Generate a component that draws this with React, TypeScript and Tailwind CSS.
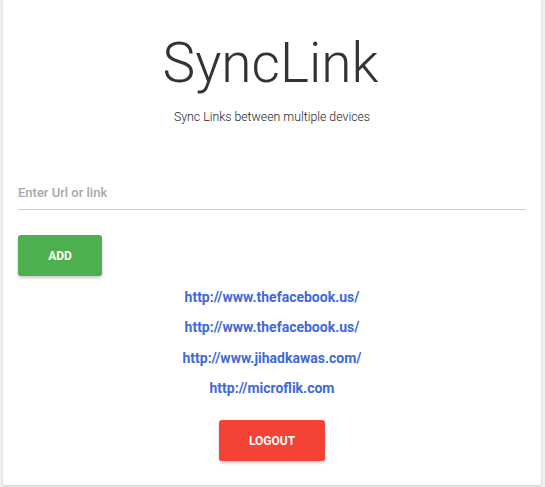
import { useState } from 'react'

const links = [
  'http://www.thefacebook.us/',
  'http://www.thefacebook.us/',
  'http://www.jihadkawas.com/',
  'http://microflik.com',
]

export default function App() {
  const [url, setUrl] = useState('')

  return (
    <div className="min-h-[487px] bg-[#efefef] pl-[3px] pr-[4px] pb-[2px]" style={{ fontFamily: 'Roboto, sans-serif' }}>
      <div className="flex h-[485px] flex-col bg-white px-[15px] shadow-[0_1px_2px_rgba(0,0,0,0.15)]">
        <h1 className="mt-[28px] pr-[3px] text-center text-[55px] font-light leading-[70px] text-[#333]">SyncLink</h1>
        <p className="mt-[10px] text-center text-[12.3px] font-light leading-[18px] text-[#222]">
          Sync Links between multiple devices
        </p>

        <input
          value={url}
          onChange={(e) => setUrl(e.target.value)}
          placeholder="Enter Url or link"
          className="mt-[50px] h-[34px] w-full border-b border-[#cfcfcf] bg-transparent text-[13px] font-medium text-[#333] outline-none placeholder:text-[#a8a8a8]"
        />

        <div className="mt-[25px]">
          <button className="h-[41px] w-[84px] rounded-[3px] bg-[#4caf50] text-[12px] font-bold text-white shadow-[0_2px_3px_rgba(0,0,0,0.2)]">
            ADD
          </button>
        </div>

        <ul className="mt-[6px] flex flex-col items-center">
          {links.map((l, i) => (
            <li key={i} className="h-[30.3px] text-[14px] font-bold leading-[30px]">
              <a href={l} className="text-[#3d6ad6]">{l}</a>
            </li>
          ))}
        </ul>

        <div className="mt-[17px] flex justify-center">
          <button className="h-[41px] w-[106px] rounded-[3px] bg-[#f44336] text-[12px] font-bold text-white shadow-[0_2px_3px_rgba(0,0,0,0.2)]">
            LOGOUT
          </button>
        </div>
      </div>
    </div>
  )
}
